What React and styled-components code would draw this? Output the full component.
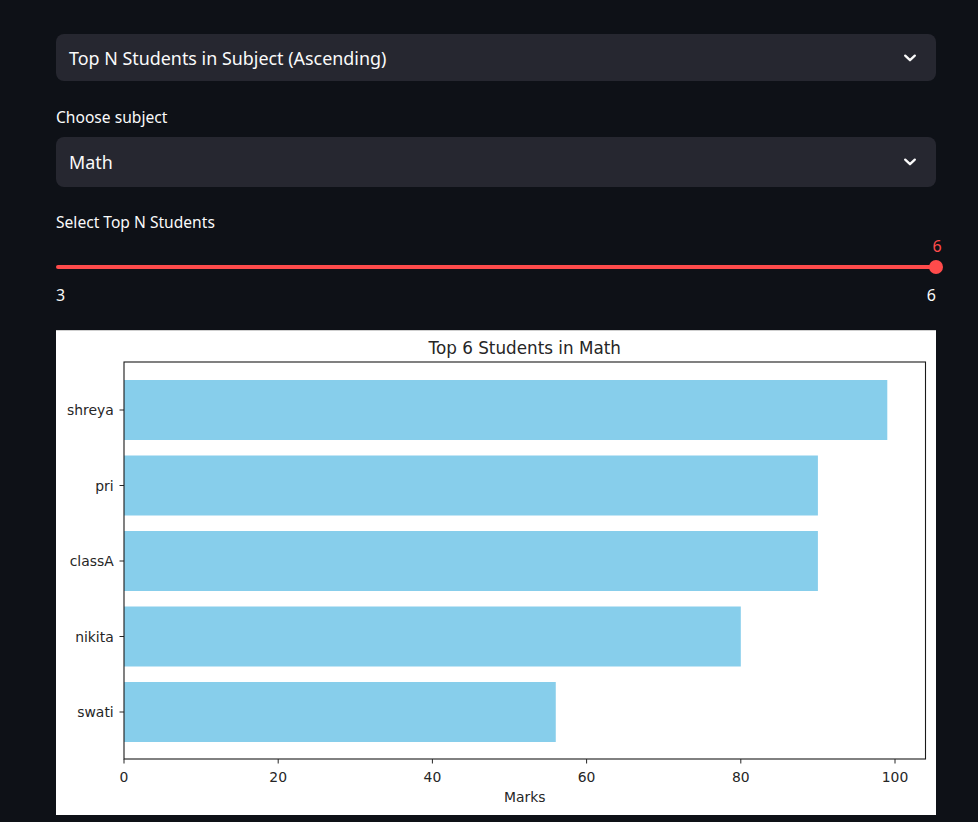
import React from "react";
import styled, { createGlobalStyle } from "styled-components";

const GlobalStyle = createGlobalStyle`
  html, body {
    margin: 0;
    padding: 0;
    background: #0e1117;
  }
  body {
    font-family: "Noto Sans", "Open Sans", sans-serif;
    color: #fafafa;
  }
`;

const Page = styled.div`
  display: flex;
  flex-direction: column;
  padding: 34px 42px 0 56px;
  width: 880px;
`;

const SelectBox = styled.div`
  height: ${(p) => p.$h}px;
  background: #262730;
  border-radius: 8px;
  display: flex;
  align-items: center;
  justify-content: space-between;
  padding: 0 18px 0 13px;
  font-size: 17.9px;
  color: #fafafa;
  flex-shrink: 0;
`;

const Chevron = styled.svg`
  width: 16px;
  height: 16px;
  display: block;
`;

const Label = styled.div`
  font-size: 15.6px;
  line-height: 22px;
  color: #fafafa;
  margin-top: ${(p) => p.$mt}px;
  margin-bottom: ${(p) => p.$mb}px;
`;

const Slider = styled.div`
  display: flex;
  flex-direction: column;
`;

const ValueRow = styled.div`
  display: flex;
  justify-content: flex-end;
  margin-top: 5.3px;
  height: 16px;
`;

const ThumbValue = styled.span`
  width: 14px;
  margin-right: -8px;
  text-align: center;
  font-size: 16px;
  line-height: 16px;
  color: #ff4b4b;
`;

const Track = styled.div`
  position: relative;
  margin-top: 11.2px;
  height: 4px;
  border-radius: 2px;
  background: #ff4b4b;
`;

const Thumb = styled.div`
  position: absolute;
  right: -7px;
  top: -5px;
  width: 14px;
  height: 14px;
  border-radius: 50%;
  background: #ff4b4b;
`;

const MinMax = styled.div`
  display: flex;
  justify-content: space-between;
  margin-top: 15px;
  font-size: 16px;
  line-height: 22px;
  color: #fafafa;
`;

const ChartBox = styled.div`
  margin-top: 23.5px;
  height: 485px;
  background: #ffffff;
`;

const ChartSvg = styled.svg`
  display: block;
  font-family: "DejaVu Sans", sans-serif;
`;

const ChevronIcon = () => (
  <Chevron viewBox="0 0 16 16">
    <polyline
      points="3.2,5.6 8,10.2 12.8,5.6"
      fill="none"
      stroke="#fafafa"
      strokeWidth="2.3"
      strokeLinecap="round"
      strokeLinejoin="round"
    />
  </Chevron>
);

const data = [
  { name: "shreya", v: 99 },
  { name: "pri", v: 90 },
  { name: "classA", v: 90 },
  { name: "nikita", v: 80 },
  { name: "swati", v: 56 },
];

const X0 = 68;
const SCALE = 7.71;
const AX_TOP = 32;
const AX_BOTTOM = 429;
const AX_RIGHT = 869.5;
const PITCH = 75.5;
const FIRST = 80;
const BAR_H = 60;

const Chart = () => {
  const ticks = [0, 20, 40, 60, 80, 100];
  const ink = "#262626";
  return (
    <ChartSvg width="880" height="485" viewBox="0 0 880 485">
      <line x1="0" y1="0.5" x2="880" y2="0.5" stroke="#cfcfcf" strokeWidth="1" />
      <text x="468.7" y="23.5" fontSize="16.8" textAnchor="middle" fill={ink}>
        Top 6 Students in Math
      </text>
      {data.map((d, i) => {
        const cy = FIRST + i * PITCH;
        return (
          <g key={d.name}>
            <rect
              x={X0}
              y={cy - BAR_H / 2}
              width={d.v * SCALE}
              height={BAR_H}
              fill="#87ceeb"
            />
            <line x1={X0 - 4.5} y1={cy} x2={X0} y2={cy} stroke={ink} strokeWidth="1" />
            <text
              x="57.7"
              y={cy}
              fontSize="13.9"
              textAnchor="end"
              dominantBaseline="central"
              fill={ink}
            >
              {d.name}
            </text>
          </g>
        );
      })}
      <rect
        x={X0}
        y={AX_TOP}
        width={AX_RIGHT - X0}
        height={AX_BOTTOM - AX_TOP}
        fill="none"
        stroke="#1a1a1a"
        strokeWidth="1.1"
      />
      {ticks.map((t) => {
        const x = X0 + t * SCALE;
        return (
          <g key={t}>
            <line x1={x} y1={AX_BOTTOM} x2={x} y2={AX_BOTTOM + 4.5} stroke={ink} strokeWidth="1" />
            <text x={x} y="452" fontSize="13.9" textAnchor="middle" fill={ink}>
              {t}
            </text>
          </g>
        );
      })}
      <text x="468.7" y="472" fontSize="13.9" textAnchor="middle" fill={ink}>
        Marks
      </text>
    </ChartSvg>
  );
};

export default function App() {
  return (
    <>
      <GlobalStyle />
      <Page>
        <SelectBox $h={47}>
          <span>Top N Students in Subject (Ascending)</span>
          <ChevronIcon />
        </SelectBox>
        <Label $mt={25} $mb={9}>Choose subject</Label>
        <SelectBox $h={50}>
          <span>Math</span>
          <ChevronIcon />
        </SelectBox>
        <Label $mt={24} $mb={0}>Select Top N Students</Label>
        <Slider>
          <ValueRow>
            <ThumbValue>6</ThumbValue>
          </ValueRow>
          <Track>
            <Thumb />
          </Track>
          <MinMax>
            <span>3</span>
            <span>6</span>
          </MinMax>
        </Slider>
        <ChartBox>
          <Chart />
        </ChartBox>
      </Page>
    </>
  );
}
